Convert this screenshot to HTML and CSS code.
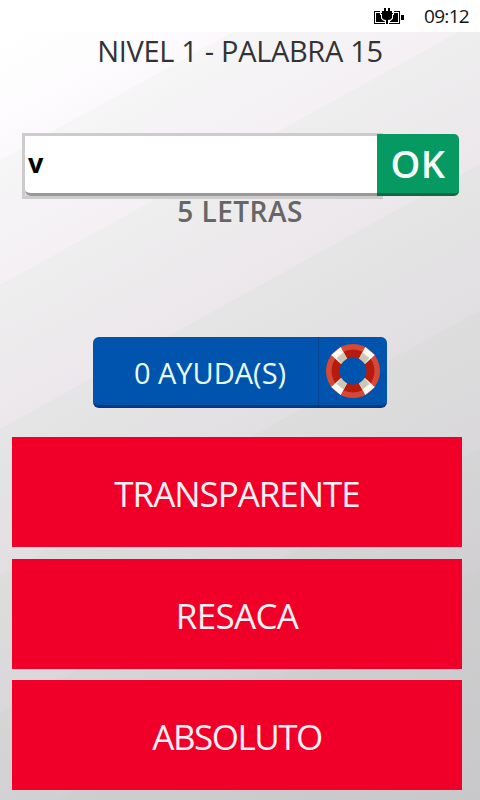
FILE: index.html
```html
<!DOCTYPE html>
<html lang="es">
<head>
<meta charset="utf-8">
<title>Nivel 1</title>
<link rel="stylesheet" href="styles.css">
</head>
<body>
<header class="status">
  <svg class="battery" width="30" height="17" viewBox="0 0 30 17">
    <rect x="0.5" y="3.5" width="25" height="12" fill="#fff" stroke="#000"/>
    <path d="M2 5h4v2h1v3q1 2 4 3v1H2zM24 5h-4v2h-1v3q-1 2-3 3v1h8z" fill="#000"/>
    <path d="M6 2h14v5h-1v3q-1 3-4 3.500v3h-4v-3q-3-.5-4-3.500v-3h-1z" fill="#fff"/>
    <path d="M10 0h2v3h2V0h2v3h2v2h1v1h-1v4q-1 2-4 2v4h-2v-4q-3 0-4-2V6H7V5h1V3h2z" fill="#000"/>
    <rect x="27" y="7" width="3" height="5" fill="#000"/>
  </svg>
  <span class="clock">09:12</span>
</header>
<main class="game">
  <h1 class="title">NIVEL 1 - PALABRA 15</h1>
  <div class="answer">
    <div class="field"><div class="value">v</div></div>
    <button class="ok">OK</button>
  </div>
  <p class="letters">5 LETRAS</p>
  <button class="help">
    <span class="help-text">0 AYUDA(S)</span>
    <span class="help-icon">
      <svg width="54" height="54" viewBox="-27 -27 54 54">
        <circle r="27" fill="#d64937"/>
        <circle r="21.500" fill="#b51c0d"/>
        <g id="bands">
          <path d="M-12.300 -24L-21.800 -16L-12 -7L-6 -12.500z" fill="#fbfaf5"/>
          <path d="M-9.300 -18.500L-16.500 -13L-11.500 -7L-6 -12z" fill="#cbc8b3"/>
          <path d="M12.300 -24L21.800 -16L12 -7L6 -12.500z" fill="#fbfaf5"/>
          <path d="M9.300 -18.500L16.500 -13L11.500 -7L6 -12z" fill="#cbc8b3"/>
        </g>
        <use href="#bands" transform="scale(1 -1)"/>
        <circle r="13.500" fill="#0054ae"/>
      </svg>
    </span>
  </button>
  <div class="clues">
    <div class="clue wide">TRANSPARENTE</div>
    <div class="clue short">RESACA</div>
    <div class="clue medium">ABSOLUTO</div>
  </div>
</main>
</body>
</html>
```
FILE: styles.css
```css
* { box-sizing: border-box; }
body {
  margin: 0;
  width: 480px;
  height: 800px;
  overflow: hidden;
  font-family: "Open Sans", "Noto Sans", sans-serif;
  background: #fff;
}
button { border: 0; padding: 0; font: inherit; }
.status {
  height: 32px;
  display: flex;
  justify-content: flex-end;
  align-items: center;
  padding-right: 11px;
  background: #fff;
}
.battery { margin-right: 20px; }
.clock { font-size: 19px; line-height: 32px; letter-spacing: -0.7px; color: #111; }
.game {
  height: 768px;
  display: flex;
  flex-direction: column;
  background: linear-gradient(151.1deg,
    #fff 0, #fefdfe 50px, #fcf9fc 112px,
    #f6f6f6 113px, #f4f0f4 221px,
    #eeeeee 222px, #ece7eb 347px,
    #e5e5e5 348px, #e2dfe2 475px,
    #dddddd 476px, #d9d7da 596px,
    #d5d5d6 597px, #d1cfd2 700px,
    #cececf 701px, #c8c8ca 904px);
}
.title {
  margin: 0;
  height: 101px;
  text-align: center;
  font-size: 29px;
  line-height: 38px;
  font-weight: 400;
  letter-spacing: -0.33px;
  color: #333;
}
.answer { display: flex; height: 66px; padding-left: 22px; flex: none; }
.field {
  width: 361px;
  height: 66px;
  border: 3px solid #ccc;
  border-right: 0;
  background: #ddd;
}
.value {
  height: 60px;
  border-bottom: 3px solid #999;
  border-bottom-left-radius: 6px;
  background: #fff;
  font-size: 27px;
  font-weight: 700;
  line-height: 53px;
  padding-left: 3px;
}
.ok {
  position: relative;
  width: 82px;
  height: 62px;
  margin: 1px 0 0 -6px;
  border-bottom: 3px solid #0b6b45;
  border-radius: 0 5px 5px 0;
  background: #069a62;
  color: #f4fffa;
  font-size: 38px;
  font-weight: 600;
  line-height: 55px;
  letter-spacing: 0.5px;
}
.letters {
  margin: 0;
  height: 138px;
  text-align: center;
  font-size: 28px;
  font-weight: 600;
  line-height: 25px;
  letter-spacing: 0.5px;
  color: #666;
}
.help {
  display: flex;
  width: 294px;
  height: 71px;
  margin-left: 93px;
  border-bottom: 3px solid #05377f;
  border-radius: 6px;
  background: #0054ae;
  color: #e8fcff;
  flex: none;
}
.help-text {
  width: 226px;
  height: 68px;
  border-right: 1px solid #064594;
  padding-left: 9px;
  font-size: 29px;
  line-height: 71px;
}
.help-icon { display: flex; width: 68px; height: 68px; align-items: center; justify-content: center; }
.clues { display: grid; gap: 12px; margin: 29px 18px 0 12px; }
.clue {
  height: 110px;
  background: #f00028;
  color: #fff1f5;
  text-align: center;
  font-size: 35px;
  line-height: 114px;
}
.wide { letter-spacing: -1.05px; }
.short { letter-spacing: -0.7px; }
.medium { letter-spacing: -1.5px; }
.clue:last-child { margin-top: -1px; }
```
